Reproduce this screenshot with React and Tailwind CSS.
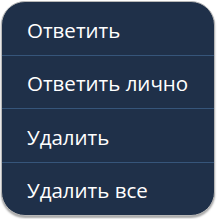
import React from "react";

export default function App() {
  const items = ["Ответить", "Ответить лично", "Удалить", "Удалить все"];
  return (
    <div className="w-[217px] h-[219px] bg-white pt-[1px] pl-[1px]">
      <div
        className="w-[214px] h-[215px] rounded-[24px] border border-[#b8b8b8] bg-[#1f3049] overflow-hidden flex flex-col shadow-[0_2px_2px_rgba(0,0,0,0.35)]"
        style={{ fontFamily: '"Open Sans", "Noto Sans", sans-serif' }}
      >
        {items.map((t, i) => (
          <div
            key={t}
            className={
              "flex-1 flex items-center pl-[25px] pt-[4px] text-[20.5px] text-white " +
              (i < 3 ? "border-b border-[#36557a]" : "")
            }
          >
            {t}
          </div>
        ))}
      </div>
    </div>
  );
}
